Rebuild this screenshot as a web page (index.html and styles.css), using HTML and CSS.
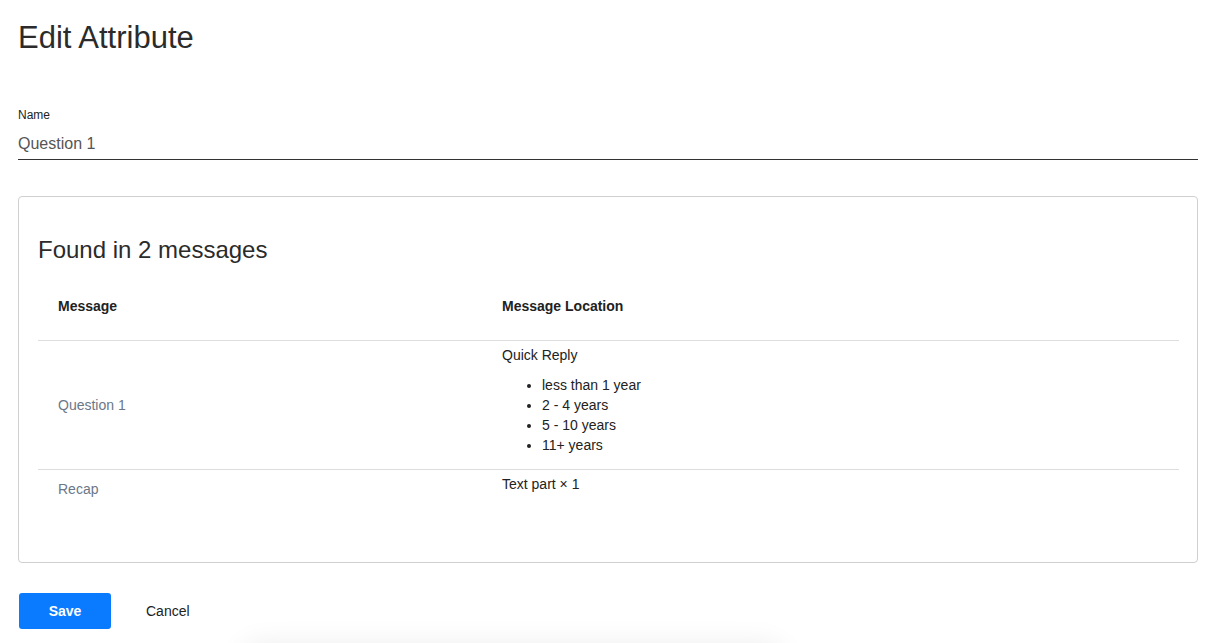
FILE: index.html
```html
<!DOCTYPE html>
<html lang="en">
<head>
  <meta charset="UTF-8" />
  <title>Edit Attribute</title>
  <meta name="viewport" content="width=device-width, initial-scale=1.0"/>
  <link rel="stylesheet" href="styles.css">
</head>
<body>
  <div class="page">
    <h1 class="page-title">Edit Attribute</h1>

    <!-- name field -->
    <div class="field">
      <label class="field-label" for="attrName">Name</label>
      <input class="field-input" id="attrName" type="text" value="Question 1" />
    </div>

    <!-- usage card -->
    <div class="usage-card">
      <h2 class="usage-title">Found in 2 messages</h2>
      <table class="usage-table">
        <thead>
          <tr>
            <th class="col-message">Message</th>
            <th>Message Location</th>
          </tr>
        </thead>
        <tbody>
          <tr>
            <td class="msg-name">Question 1</td>
            <td class="msg-location">
              <div>Quick Reply</div>
              <ul class="reply-list">
                <li>less than 1 year</li>
                <li>2 - 4 years</li>
                <li>5 - 10 years</li>
                <li>11+ years</li>
              </ul>
            </td>
          </tr>
          <tr>
            <td class="msg-name">Recap</td>
            <td class="msg-location">
              <div>Text part &times; 1</div>
            </td>
          </tr>
        </tbody>
      </table>
    </div>

    <div class="actions">
      <button class="btn-save">Save</button>
      <button class="btn-cancel">Cancel</button>
    </div>
  </div>

  <!-- shadow of the panel below the fold -->
  <div class="fold-shadow"></div>
</body>
</html>
```

FILE: styles.css
```css
/* 
 ================================
 page
 ================================
*/
body {
  font-family: "Liberation Sans", Arial, sans-serif;
  background: #fff;
  color: #222;
  margin: 0;
  padding: 0;
  overflow: hidden;
}
.page {
  padding: 0 21px 0 18px;
}
.page-title {
  margin: 0;
  padding-top: 20px;
  font-size: 31px;
  line-height: 36px;
  font-weight: normal;
  color: #2b2b2b;
}

/* 
 ================================
 name field
 ================================
*/
.field {
  margin-top: 51px;
}
.field-label {
  display: block;
  font-size: 12px;
  line-height: 16px;
  color: #222;
}
.field-input {
  display: block;
  width: 100%;
  box-sizing: border-box;
  margin-top: 3px;
  padding: 8px 0 5px 0;
  border: none;
  border-bottom: 1px solid #333;
  font-family: inherit;
  font-size: 16px;
  line-height: 20px;
  color: #555;
  outline: none;
}

/* 
 ================================
 usage card
 ================================
*/
.usage-card {
  margin-top: 36px;
  border: 1px solid #cfcfcf;
  border-radius: 4px;
  padding: 20px 18px 20px 19px;
}
.usage-title {
  margin: 19px 0 10px 0;
  font-size: 24px;
  line-height: 27px;
  font-weight: normal;
  color: #2b2b2b;
}
.usage-table {
  width: 100%;
  border-collapse: collapse;
  font-size: 14px;
  line-height: 20px;
  margin-bottom: 34px;
}
.usage-table th {
  text-align: left;
  font-weight: bold;
  padding: 23px 20px 24px 20px;
  border-bottom: 1px solid #ddd;
  color: #222;
}
.usage-table .col-message {
  width: 404px;
}
.usage-table td {
  vertical-align: top;
}
.usage-table tbody tr + tr td {
  border-top: 1px solid #ddd;
}
.msg-name {
  vertical-align: middle !important;
  padding: 9px 20px;
  color: #6b7787;
}
.msg-location {
  padding: 4px 20px;
  color: #222;
}
.reply-list {
  margin: 10px 0;
  padding-left: 40px;
}

/* 
 ================================
 actions
 ================================
*/
.actions {
  display: flex;
  align-items: center;
  gap: 15px;
  margin-top: 30px;
}
.btn-save {
  width: 92px;
  height: 36px;
  margin-left: 1px;
  border: none;
  border-radius: 3px;
  background: #0a7bff;
  color: #fff;
  font-family: inherit;
  font-size: 14px;
  font-weight: bold;
  cursor: pointer;
}
.btn-cancel {
  border: none;
  background: none;
  padding: 0 20px;
  font-family: inherit;
  font-size: 14px;
  color: #222;
  cursor: pointer;
}

.fold-shadow {
  position: fixed;
  left: 240px;
  bottom: -40px;
  width: 545px;
  height: 40px;
  border-radius: 20px;
  box-shadow: 0 0 28px rgba(0, 0, 0, 0.07);
}
```
